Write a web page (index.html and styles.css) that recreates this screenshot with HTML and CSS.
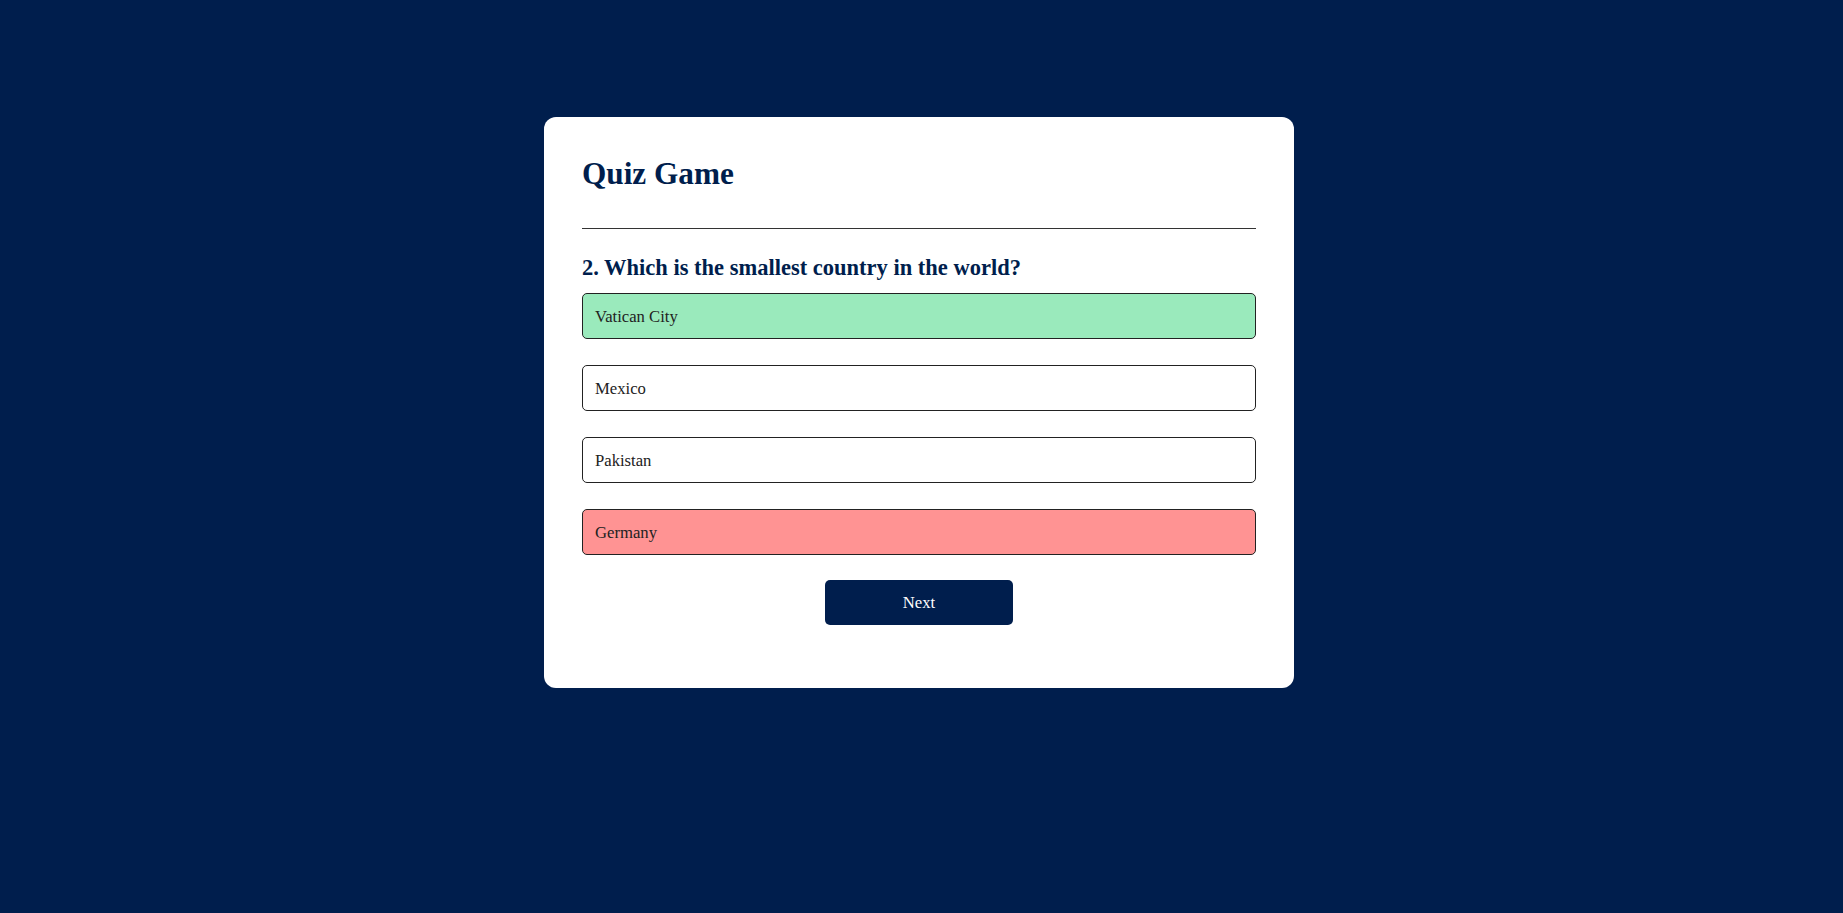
FILE: index.html
```html
<!DOCTYPE html>
<html lang="en">
<head>
<meta charset="utf-8">
<title>Quiz Game</title>
<link rel="stylesheet" href="styles.css">
</head>
<body>
  <div class="app">
    <h1 class="title">Quiz Game</h1>
    <div class="quiz">
      <h2 class="question">2. Which is the smallest country in the world?</h2>
      <div class="answers">
        <button class="btn correct">Vatican City</button>
        <button class="btn">Mexico</button>
        <button class="btn">Pakistan</button>
        <button class="btn incorrect">Germany</button>
      </div>
      <button class="next-btn">Next</button>
    </div>
  </div>
</body>
</html>
```
FILE: styles.css
```css
* {
  box-sizing: border-box;
}

html, body {
  margin: 0;
  padding: 0;
}

body {
  background: #001e4d;
  font-family: "Liberation Serif", "Times New Roman", serif;
  min-height: 913px;
  padding-right: 5px;
}

.app {
  width: 750px;
  margin: 117px auto 0;
  background: #fff;
  border-radius: 12px;
  padding: 37px 38px 38px 38px;
}

.title {
  margin: 0;
  font-size: 31.25px;
  line-height: 40px;
  font-weight: 700;
  color: #001e4d;
  padding-bottom: 34px;
  border-bottom: 1px solid #333;
}

.quiz {
  padding: 27px 0 25px;
}

.question {
  margin: 0;
  font-size: 22.5px;
  line-height: 24px;
  font-weight: 700;
  color: #001e4d;
}

.answers {
  display: flex;
  flex-direction: column;
  gap: 26px;
  margin-top: 13px;
}

.btn {
  display: block;
  width: 100%;
  height: 46px;
  background: #fff;
  color: #222;
  font-family: "Liberation Serif", "Times New Roman", serif;
  font-size: 16.67px;
  line-height: 19px;
  font-weight: 400;
  text-align: left;
  border: 1px solid #222;
  border-radius: 5px;
  padding: 12px 12px;
  margin: 0;
}

.btn.correct {
  background: #9aeabc;
}

.btn.incorrect {
  background: #ff9393;
}

.next-btn {
  display: block;
  width: 188px;
  height: 45px;
  margin: 25px auto 0;
  background: #001e4d;
  color: #fff;
  border: 0;
  border-radius: 5px;
  font-family: "Liberation Serif", "Times New Roman", serif;
  font-size: 16.67px;
  line-height: 19px;
  padding: 0;
}
```
